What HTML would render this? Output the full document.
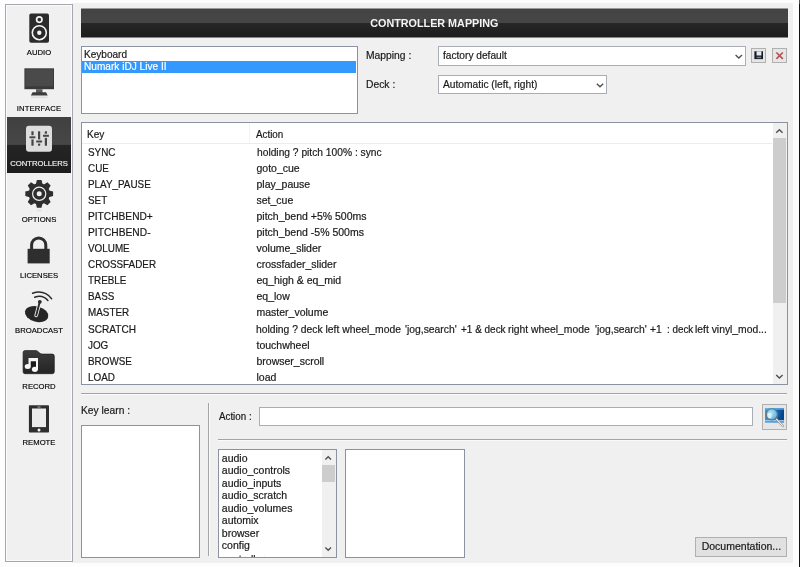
<!DOCTYPE html>
<html><head><meta charset="utf-8"><title>Controller Mapping</title>
<style>
*{box-sizing:border-box;margin:0;padding:0}
html,body{width:800px;height:567px;overflow:hidden;background:#fdfdfd;font-family:"Liberation Sans",Arial,sans-serif;font-size:10.5px;color:#1a1a1a}
.abs{position:absolute}
#right{left:72px;top:3px;width:721px;height:560px;background:#f0f0f0}
#edge{left:798.7px;top:0;width:1.3px;height:567px;background:#141414}
#edgered{left:798.7px;top:0;width:1.3px;height:4px;background:#f01010}
#side{left:5px;top:4px;width:68px;height:558px;background:#f0f0f0;border:1px solid #a6a6b0;box-shadow:inset 0 0 0 1px #fbfbfb}
.lbl{position:absolute;left:-1px;width:68px;text-align:center;font-size:7.7px;letter-spacing:0;color:#000;-webkit-text-stroke:0.15px currentColor;line-height:10px;height:10px;white-space:nowrap}
#hdr{left:81px;top:8px;width:707px;height:30px;background:linear-gradient(to bottom,#9a9a9a 0,#9a9a9a 1px,#434343 1px,#464646 15px,#272727 15px,#1d1d1d 29px,#868686 29px,#868686 30px);color:#f4f4f4;font-weight:bold;font-size:11.5px;text-align:center;line-height:30px}
#hdr span{display:inline-block;transform:scaleX(0.937)}
.k{transform:scaleX(0.94);transform-origin:0 50%}
.a{transform:scaleX(0.985);transform-origin:0 50%}
.box{position:absolute;background:#fff;border:1px solid #8c92a0}
.cb{border-color:#a9adb6}
.t{position:absolute;white-space:nowrap;line-height:14px;height:14px;-webkit-text-stroke:0.2px currentColor}
.btn{position:absolute;background:#e6e6e6;border:1px solid #b0b0b0}
.hline{position:absolute;height:1px;background:#a4a4a4;box-shadow:0 1px 0 #fafafa}
.vline{position:absolute;width:1px;background:#a4a4a4;box-shadow:1px 0 0 #fafafa}
svg{position:absolute;overflow:visible}
</style></head><body><div id="wrap" style="position:absolute;left:0;top:0;width:800px;height:567px;will-change:transform">
<div class="abs" id="right"></div><div class="abs" id="edge"></div><div class="abs" id="edgered"></div>
<div class="abs" id="side"></div>
<div class="abs" style="left:7px;top:117px;width:64px;height:56px;background:linear-gradient(#404040 0,#474747 49%,#252525 50%,#1d1d1d 100%)"></div>
<svg width="80" height="567" style="left:0;top:0" viewBox="0 0 80 567">
<defs><linearGradient id="fold" x1="0" x2="0" y1="0" y2="1"><stop offset="0" stop-color="#3c3c3c"/><stop offset="1" stop-color="#242424"/></linearGradient></defs>
<!-- audio -->
<rect x="29.3" y="13.6" width="19.7" height="29.2" rx="1.8" fill="#2b2b2b"/>
<circle cx="39.3" cy="19.6" r="2.7" fill="none" stroke="#f4f4f4" stroke-width="1.7"/>
<circle cx="39.3" cy="32.7" r="7" fill="none" stroke="#f4f4f4" stroke-width="1.6"/>
<circle cx="39.3" cy="32.7" r="2.2" fill="#f4f4f4"/>
<!-- interface -->
<rect x="24.4" y="68.3" width="29.6" height="20.9" fill="#3a3a3a"/>
<rect x="25.4" y="69.3" width="27.6" height="17" fill="#4a4a4a"/>
<rect x="36" y="89.2" width="6.5" height="4" fill="#5a5a5a"/>
<path d="M32.5 92.3h13.6l1.6 3.2h-16.8z" fill="#3c3c3c"/>
<rect x="31" y="96.5" width="16.5" height="1.6" fill="#dcdcdc"/>
<!-- controllers -->
<rect x="26" y="125.8" width="26" height="26" rx="3" fill="#dedede"/>
<g fill="#454545"><rect x="31.4" y="131.3" width="2.2" height="14.4"/><rect x="38" y="131.3" width="2.2" height="14.4"/><rect x="44.8" y="131.3" width="2.2" height="14.4"/></g>
<g fill="#dedede"><rect x="31" y="135.2" width="3" height="4.2"/><rect x="37.6" y="139.4" width="3" height="4.2"/><rect x="44.4" y="133.7" width="3" height="4.2"/></g>
<g fill="#484848"><rect x="29.5" y="136.3" width="5.9" height="2"/><rect x="36.2" y="140.5" width="5.9" height="2"/><rect x="43" y="134.8" width="5.9" height="2"/></g>
<!-- options gear -->
<g transform="translate(39.2 193.8)" fill="#2e2e2e">
<circle r="10.6"/>
<g id="tth"><path d="M-3.4 -9.5L-2.3 -13.9h4.6L3.4 -9.5z"/></g>
<use href="#tth" transform="rotate(45)"/><use href="#tth" transform="rotate(90)"/><use href="#tth" transform="rotate(135)"/><use href="#tth" transform="rotate(180)"/><use href="#tth" transform="rotate(225)"/><use href="#tth" transform="rotate(270)"/><use href="#tth" transform="rotate(315)"/>
<circle r="6.6" fill="none" stroke="#f0f0f0" stroke-width="1.2"/>
<circle r="2.5" fill="#f0f0f0"/>
</g>
<rect x="36.7" y="209.6" width="5" height="1.6" fill="#dedede"/><rect x="29.5" y="211" width="3" height="0.8" fill="#e6e6e6"/><rect x="46" y="211" width="3" height="0.8" fill="#e6e6e6"/>
<!-- licenses lock -->
<rect x="27.6" y="248.8" width="22.1" height="14.6" fill="#2e2e2e"/>
<path d="M31.6 249.5v-4.5a7.1 7.1 0 0 1 14.2 0v4.5" fill="none" stroke="#2e2e2e" stroke-width="3"/>
<!-- broadcast -->
<ellipse cx="36.6" cy="314.1" rx="11.9" ry="7.7" transform="rotate(14 36.6 314.1)" fill="#262626"/>
<path d="M36.2 315.4 L39.6 302.6" stroke="#f0f0f0" stroke-width="3.7" stroke-linecap="round" fill="none"/>
<path d="M36.2 315.4 L39.6 302.6" stroke="#2a2a2a" stroke-width="1.9" stroke-linecap="round" fill="none"/>
<circle cx="39.8" cy="301.8" r="1.9" fill="#2a2a2a"/>
<path d="M32.6 293.2 Q44 289.4 51.6 298.7" stroke="#2a2a2a" stroke-width="1.5" fill="none" stroke-linecap="round"/>
<path d="M34.7 297.2 Q42.6 294.1 47.9 300.5" stroke="#2a2a2a" stroke-width="1.5" fill="none" stroke-linecap="round"/>
<!-- record folder -->
<path d="M25.1 350.6h10.6q1.6 0 3 1.6t3.4 1.9h10.2a2 2 0 0 1 2 2v15.6a2 2 0 0 1 -2 2h-27.2a2 2 0 0 1 -2 -2v-19.1a2 2 0 0 1 2 -2z" fill="url(#fold)" stroke="#1e1e1e" stroke-width="0.7"/>
<rect x="30.7" y="361.2" width="5.3" height="5.4" fill="#1a1a1a"/>
<path d="M28.5 358h9.5v11.2h-2v-7.9h-5.3v5h-2.2z" fill="#f6f6f6"/>
<ellipse cx="27.7" cy="366.4" rx="3" ry="2.5" fill="#f6f6f6"/>
<ellipse cx="34.9" cy="369.3" rx="3" ry="2.6" fill="#f6f6f6"/>
<!-- remote phone -->
<rect x="28.9" y="405.2" width="20.1" height="27.3" rx="0.8" fill="#2e2e2e"/>
<rect x="32" y="408.5" width="14" height="18.6" fill="#ececec"/>
<circle cx="39" cy="430" r="1.5" fill="#f4f4f4"/>
<rect x="37.5" y="406.6" width="3" height="0.8" fill="#cfcfcf"/>
</svg>
<div class="lbl" style="left:5px;top:47.6px">AUDIO</div>
<div class="lbl" style="left:5px;top:103.5px;letter-spacing:0.17px">INTERFACE</div>
<div class="lbl" style="left:5px;top:159.0px;color:#f2f2f2">CONTROLLERS</div>
<div class="lbl" style="left:5px;top:215.0px">OPTIONS</div>
<div class="lbl" style="left:5px;top:270.5px">LICENSES</div>
<div class="lbl" style="left:5px;top:326.1px">BROADCAST</div>
<div class="lbl" style="left:5px;top:381.8px">RECORD</div>
<div class="lbl" style="left:5px;top:437.7px">REMOTE</div>
<div class="abs" id="hdr"><span>CONTROLLER MAPPING</span></div>
<div class="box" style="left:81px;top:46px;width:277px;height:68px"></div>
<div class="abs" style="left:82px;top:61px;width:274px;height:12px;background:#3399ff"></div>
<div class="t a" style="left:84.3px;top:47.3px;;transform:scaleX(0.957)">Keyboard</div>
<div class="t a" style="left:84.3px;top:59.3px;color:#fff;transform:scaleX(0.962)">Numark iDJ Live II</div>
<div class="t a" style="left:366.2px;top:47.5px;;transform:scaleX(0.982)">Mapping :</div>
<div class="t a" style="left:366.2px;top:77px;;transform:scaleX(0.983)">Deck :</div>
<div class="box cb" style="left:438px;top:46px;width:308px;height:20px"></div>
<div class="t a" style="left:443px;top:47.8px;;transform:scaleX(0.967)">factory default</div>
<div class="box cb" style="left:438px;top:75px;width:169px;height:19px"></div>
<div class="t a" style="left:443px;top:76.5px;;transform:scaleX(0.975)">Automatic (left, right)</div>
<div class="btn" style="left:751px;top:48px;width:15px;height:15px"></div>
<div class="btn" style="left:772px;top:48px;width:15px;height:15px"></div>
<svg width="40" height="20" style="left:750px;top:46px" viewBox="750 46 40 20">
<rect x="754.4" y="51.3" width="8.6" height="7.8" fill="#161a24"/><rect x="756.8" y="51.3" width="4.6" height="4.2" fill="#e4e8f0"/><rect x="756.2" y="51.3" width="0.8" height="4" fill="#8088a0"/><rect x="756.6" y="56.7" width="4.6" height="1.5" fill="#7c8088"/>
<path d="M776.4 52.5l6.4 6.4M782.8 52.5l-6.4 6.4" stroke="#b85252" stroke-width="1.7" fill="none"/>
</svg>
<div class="box" style="left:81px;top:122px;width:707px;height:263px"></div>
<div class="abs" style="left:82px;top:143px;width:690px;height:1px;background:#e3eef9"></div>
<div class="abs" style="left:249px;top:123px;width:1px;height:20px;background:#eef3f8"></div>
<div class="abs" style="left:773px;top:123px;width:14px;height:261px;background:#f0f0f0"></div>
<div class="abs" style="left:773px;top:138px;width:13px;height:165px;background:#cdcdcd"></div>
<div class="t a" style="left:87.3px;top:126.5px;;transform:scaleX(0.96)">Key</div>
<div class="t a" style="left:256.3px;top:126.5px;;transform:scaleX(0.935)">Action</div>
<div class="t k" style="left:87.6px;top:145.4px;">SYNC</div><div class="t a" style="left:256.5px;top:145.4px;;transform:scaleX(0.975)">holding ? pitch 100% : sync</div>
<div class="t k" style="left:87.6px;top:161.4px;">CUE</div><div class="t a" style="left:256.5px;top:161.4px;;transform:scaleX(1)">goto_cue</div>
<div class="t k" style="left:87.6px;top:177.4px;">PLAY_PAUSE</div><div class="t a" style="left:256.5px;top:177.4px;;transform:scaleX(1)">play_pause</div>
<div class="t k" style="left:87.6px;top:193.4px;">SET</div><div class="t a" style="left:256.5px;top:193.4px;;transform:scaleX(1)">set_cue</div>
<div class="t k" style="left:87.6px;top:209.4px;;transform:scaleX(0.97)">PITCHBEND+</div><div class="t a" style="left:256.5px;top:209.4px;;transform:scaleX(1)">pitch_bend +5% 500ms</div>
<div class="t k" style="left:87.6px;top:225.4px;;transform:scaleX(0.975)">PITCHBEND-</div><div class="t a" style="left:256.5px;top:225.4px;;transform:scaleX(1)">pitch_bend -5% 500ms</div>
<div class="t k" style="left:87.6px;top:241.4px;">VOLUME</div><div class="t a" style="left:256.5px;top:241.4px;;transform:scaleX(1)">volume_slider</div>
<div class="t k" style="left:87.6px;top:257.4px;">CROSSFADER</div><div class="t a" style="left:256.5px;top:257.4px;;transform:scaleX(1)">crossfader_slider</div>
<div class="t k" style="left:87.6px;top:273.4px;">TREBLE</div><div class="t a" style="left:256.5px;top:273.4px;;transform:scaleX(1)">eq_high &amp; eq_mid</div>
<div class="t k" style="left:87.6px;top:289.4px;">BASS</div><div class="t a" style="left:256.5px;top:289.4px;;transform:scaleX(1)">eq_low</div>
<div class="t k" style="left:87.6px;top:305.4px;">MASTER</div><div class="t a" style="left:256.5px;top:305.4px;;transform:scaleX(1)">master_volume</div>
<div class="t k" style="left:87.6px;top:322.4px;;transform:scaleX(0.96)">SCRATCH</div>
<div class="t a" style="left:256px;top:322.4px;">holding ? deck left wheel_mode</div>
<div class="t a" style="left:405.4px;top:322.4px;">'jog,search'</div>
<div class="t a" style="left:460.7px;top:322.4px;;transform:scaleX(0.949)">+1 &amp; deck</div>
<div class="t a" style="left:508.2px;top:322.4px;">right wheel_mode</div>
<div class="t a" style="left:595px;top:322.4px;">'jog,search'</div>
<div class="t a" style="left:650.3px;top:322.4px;">+1</div>
<div class="t a" style="left:666.6px;top:322.4px;;transform:scaleX(0.935)">: deck</div>
<div class="t a" style="left:694.5px;top:322.4px;">left vinyl_mod...</div>
<div class="t k" style="left:87.6px;top:338.4px;">JOG</div><div class="t a" style="left:256.5px;top:338.4px;;transform:scaleX(1)">touchwheel</div>
<div class="t k" style="left:87.6px;top:354.4px;">BROWSE</div><div class="t a" style="left:256.5px;top:354.4px;;transform:scaleX(1)">browser_scroll</div>
<div class="t k" style="left:87.6px;top:370.4px;">LOAD</div><div class="t a" style="left:256.5px;top:370.4px;;transform:scaleX(1)">load</div>
<div class="hline" style="left:81px;top:393px;width:706px"></div>
<div class="vline" style="left:208px;top:403px;height:153px"></div>
<div class="hline" style="left:218px;top:439px;width:569px"></div>
<div class="t a" style="left:80.6px;top:402.5px;;transform:scaleX(0.978)">Key learn :</div>
<div class="box" style="left:81px;top:425px;width:119px;height:133px"></div>
<div class="t a" style="left:218.5px;top:409.3px;;transform:scaleX(0.931)">Action :</div>
<div class="box cb" style="left:259px;top:407px;width:494px;height:19px"></div>
<div class="btn" style="left:762px;top:404px;width:25px;height:26px"></div>
<svg width="30" height="30" style="left:760px;top:402px" viewBox="760 402 30 30">
<defs><linearGradient id="bg" x1="0" x2="1" y1="0" y2="0"><stop offset="0" stop-color="#2f9be0"/><stop offset="0.6" stop-color="#1668b8"/><stop offset="1" stop-color="#0a4488"/></linearGradient>
<radialGradient id="lens" cx="0.4" cy="0.4" r="0.7"><stop offset="0" stop-color="#b4e4f6"/><stop offset="1" stop-color="#4cb0e0"/></radialGradient></defs>
<rect x="765" y="408.2" width="19" height="14.2" fill="url(#bg)"/>
<rect x="765" y="408.2" width="19" height="1.6" fill="#6cbcec" opacity="0.7"/>
<path d="M784 409.8L777 420.2H784z" fill="#063c7c" opacity="0.45"/>
<rect x="765" y="420.2" width="19" height="2.2" fill="#4ea4e4"/>
<rect x="765" y="420" width="19" height="0.7" fill="#b8dcf4"/>
<path d="M776 418.8l7 7.2" stroke="#808080" stroke-width="2.3" stroke-linecap="round"/>
<path d="M776.4 419.2l6.6 6.8" stroke="#ececec" stroke-width="1.2" stroke-linecap="round"/>
<circle cx="771.8" cy="414.3" r="5.6" fill="url(#lens)" stroke="#70757a" stroke-width="1.1"/>
<ellipse cx="769.6" cy="415.6" rx="2.2" ry="2.8" fill="#f4fbff" opacity="0.75"/>
</svg>
<div class="box" style="left:218px;top:449px;width:119px;height:109px;overflow:hidden">
<div class="t" style="left:2.8px;top:0.9px">audio</div>
<div class="t" style="left:2.8px;top:13.39px">audio_controls</div>
<div class="t" style="left:2.8px;top:25.88px">audio_inputs</div>
<div class="t" style="left:2.8px;top:38.37px">audio_scratch</div>
<div class="t" style="left:2.8px;top:50.86px">audio_volumes</div>
<div class="t" style="left:2.8px;top:63.35px">automix</div>
<div class="t" style="left:2.8px;top:75.84px">browser</div>
<div class="t" style="left:2.8px;top:88.33px">config</div>
<div class="t" style="left:2.8px;top:102.02px">controller</div>
<div class="abs" style="left:103px;top:0;width:14px;height:107px;background:#f0f0f0"></div>
<div class="abs" style="left:103px;top:15px;width:12.7px;height:16.5px;background:#cdcdcd"></div>
</div>
<div class="box" style="left:345px;top:449px;width:120px;height:109px"></div>
<svg width="20" height="110" style="left:320px;top:449px" viewBox="320 449 20 110"><path d="M325.4 459.6l2.8 -2.8l2.8 2.8" fill="none" stroke="#505050" stroke-width="1.4"/><path d="M325.4 547.4l2.8 2.8l2.8 -2.8" fill="none" stroke="#505050" stroke-width="1.4"/></svg>
<div class="btn" style="left:695px;top:537px;width:92px;height:20px;background:#e1e1e1"></div>
<div class="t a" style="left:701.7px;top:539.3px;;transform:scaleX(1)">Documentation...</div>
<svg width="800" height="567" style="left:0;top:0" viewBox="0 0 800 567"><path d="M735.6 55.1l3.2 3l3.2 -3" fill="none" stroke="#505050" stroke-width="1.4"/><path d="M596.8 83.7l3.2 3l3.2 -3" fill="none" stroke="#505050" stroke-width="1.4"/><path d="M776.2 132.8l3.2 -3l3.2 3" fill="none" stroke="#505050" stroke-width="1.4"/><path d="M776.2 375.1l3.2 3l3.2 -3" fill="none" stroke="#505050" stroke-width="1.4"/></svg>
</div></body></html>
